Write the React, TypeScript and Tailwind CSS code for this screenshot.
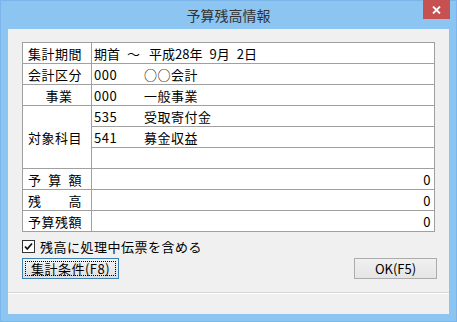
import React from 'react';

const font = { fontFamily: '"Noto Sans CJK JP", "Noto Sans", sans-serif' };

// label spread across the cell like Windows "distributed" alignment
function Spread({ text }: { text: string }) {
    return (
        <div className="flex justify-between w-[54px]">
            {text.split('').map((c, i) => (
                <span key={i}>{c}</span>
            ))}
        </div>
    );
}

function Label({ children, className = '' }: { children: React.ReactNode; className?: string }) {
    return (
        <div className={`bg-white flex items-center pl-[5px] ${className}`}>
            {children}
        </div>
    );
}

function Value({ children, right }: { children?: React.ReactNode; right?: boolean }) {
    return (
        <div className={`bg-white flex items-center ${right ? 'justify-end pr-[3px]' : 'pl-[2px]'}`}>
            {children}
        </div>
    );
}

function CodeRow({ code, name }: { code: string; name: string }) {
    return (
        <>
            <span className="inline-block w-[50px]">{code}</span>
            <span>{name}</span>
        </>
    );
}

export default function App() {
    return (
        <div
            className="w-[457px] h-[322px] bg-[#8cc4f2] border border-[#7ab6ea] flex flex-col text-black"
            style={font}
        >
            {/* Title bar */}
            <div className="relative h-[28px] flex items-center justify-center">
                <span className="text-[14px] text-[#333] leading-none">予算残高情報</span>
                <div className="absolute right-[6px] top-[-1px] w-[27px] h-[19px] bg-[#c75050] flex items-center justify-center">
                    <svg width="9" height="8" viewBox="0 0 9 8">
                        <path d="M1 0.5 L8 7.5 M8 0.5 L1 7.5" stroke="white" strokeWidth="1.8" />
                    </svg>
                </div>
            </div>

            {/* Client area */}
            <div className="mx-[7px] h-[285px] bg-[#f0f0f0] flex flex-col">
                <div className="pl-[14px] pt-[13px]">
                    <div className="grid grid-cols-[68px_342px] grid-rows-[repeat(9,20px)] gap-px p-px bg-[#a0a0a0] w-[413px] text-[13px] tracking-[0.5px] leading-none">
                        <Label><Spread text="集計期間" /></Label>
                        <Value>
                            <span className="tracking-normal">
                                <span>期首</span>
                                <span className="ml-[7px]">～</span>
                                <span className="ml-[9px]">平成28年</span>
                                <span className="ml-[7px]">9月</span>
                                <span className="ml-[7px]">2日</span>
                            </span>
                        </Value>

                        <Label><Spread text="会計区分" /></Label>
                        <Value><CodeRow code="000" name="○○会計" /></Value>

                        <Label className="justify-center pl-0 pr-[1px]">事業</Label>
                        <Value><CodeRow code="000" name="一般事業" /></Value>

                        <Label className="row-span-3"><Spread text="対象科目" /></Label>
                        <Value><CodeRow code="535" name="受取寄付金" /></Value>
                        <Value><CodeRow code="541" name="募金収益" /></Value>
                        <Value />

                        <Label><Spread text="予算額" /></Label>
                        <Value right>0</Value>

                        <Label><Spread text="残　高" /></Label>
                        <Value right>0</Value>

                        <Label><Spread text="予算残額" /></Label>
                        <Value right>0</Value>
                    </div>
                </div>

                {/* Checkbox */}
                <div className="mt-[5px] h-[18px] pl-[14px] flex items-center text-[13px] tracking-[0.5px]">
                    <svg width="13" height="13" viewBox="0 0 13 13" className="shrink-0">
                        <rect x="0.5" y="0.5" width="12" height="12" fill="white" stroke="#333" />
                        <path d="M3 6.5 L5.3 9 L10 3.5" fill="none" stroke="#111" strokeWidth="1.8" />
                    </svg>
                    <span className="ml-[5px] leading-none">残高に処理中伝票を含める</span>
                </div>

                {/* Buttons */}
                <div className="mt-[3px] pl-[14px] pr-[12px] flex justify-between text-[13px]">
                    <button className="w-[97px] h-[21px] border border-[#3c7fb1] bg-gradient-to-b from-[#f4f4f4] to-[#dedede] p-[2px]">
                        <div className="w-full h-full border border-dotted border-black flex items-center justify-center leading-none tracking-[0.5px]">
                            集計条件(F8)
                        </div>
                    </button>
                    <button className="w-[83px] h-[21px] border border-[#acacac] bg-gradient-to-b from-[#f0f0f0] to-[#e5e5e5] flex items-center justify-center leading-none">
                        OK(F5)
                    </button>
                </div>

                {/* Status separator */}
                <div className="mt-[13px] h-px bg-[#d7d7d7]" />
                <div className="h-px bg-white" />
                <div className="flex-1" />
            </div>
        </div>
    );
}
